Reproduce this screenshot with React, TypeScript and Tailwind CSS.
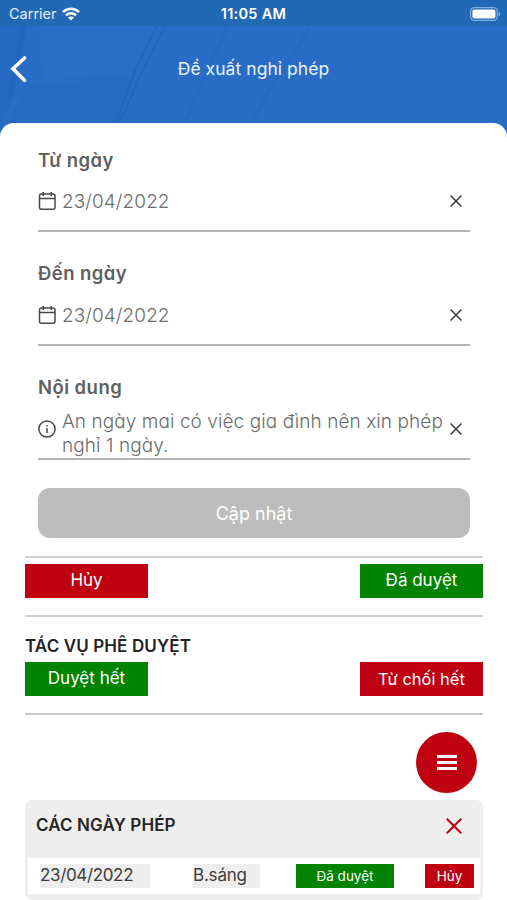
import React from 'react';
import { clsx } from 'clsx';

interface LeaveDay {
  date: string;
  session: string;
  status: string;
}

const leaveDays: LeaveDay[] = [{ date: '23/04/2022', session: 'B.sáng', status: 'Đã duyệt' }];

const CalendarIcon = () => (
  <svg viewBox="0 0 18 20" className="h-5 w-[18px] shrink-0" fill="none" stroke="#484848" strokeWidth="1.5">
    <rect x="1.5" y="3" width="15.5" height="15.2" rx="2" />
    <path d="M1.5 7.5H17M5.2 1v4M13.3 1v4" />
  </svg>
);

const InfoIcon = () => (
  <svg viewBox="0 0 18 18" className="size-[18px] shrink-0" fill="none" stroke="#484848" strokeWidth="1.5">
    <circle cx="9" cy="9" r="8.1" />
    <path d="M9 8v5M9 5v1.6" />
  </svg>
);

const CloseIcon = ({ className }: { className?: string }) => (
  <svg viewBox="0 0 12 12" className={clsx('shrink-0', className)} fill="none" stroke="currentColor">
    <path d="M.6.6l10.8 10.8M11.4.6L.6 11.4" />
  </svg>
);

interface FieldProps {
  label: string;
  icon: React.ReactNode;
  children: React.ReactNode;
  className?: string;
  textClassName?: string;
}

const Field: React.FC<FieldProps> = ({ label, icon, children, className, textClassName }) => (
  <div className={clsx('flex flex-col border-b-2 border-[#b4b6b6]', className)}>
    <label className="h-6 text-[18.5px] leading-6 font-semibold tracking-[0.45px] text-[#606060] [font-feature-settings:'cv11']">
      {label}
    </label>
    <div className="flex flex-1 items-center">
      {icon}
      <div
        className={clsx(
          "ml-[6px] flex-1 whitespace-nowrap text-[19px] leading-6 font-light text-[#6c6c6c] [font-feature-settings:'cv11']",
          textClassName
        )}
      >
        {children}
      </div>
      <CloseIcon className="mr-[8px] size-3 stroke-[1.4] text-[#333]" />
    </div>
  </div>
);

interface ActionButtonProps {
  color: 'red' | 'green';
  children: React.ReactNode;
  className?: string;
}

const ActionButton: React.FC<ActionButtonProps> = ({ color, children, className }) => (
  <button
    className={clsx(
      'flex items-center justify-center whitespace-nowrap text-white',
      color === 'red' ? 'bg-[#be0011]' : 'bg-[#008300]',
      className
    )}
  >
    {children}
  </button>
);

const StatusBar = () => (
  <div className="grid h-[26px] grid-cols-3 items-center bg-[#2169b5] pt-[2px] pr-[6px] pl-[9px] text-[14.5px] text-white">
    <div className="flex items-center gap-[5px]">
      <span className="text-[#e2eefb]">Carrier</span>
      <svg viewBox="0 0 18 14" className="h-[14px] w-[18px]" fill="none" stroke="white" strokeWidth="2.5">
        <path d="M1 5.1C5.6.7 12.4.7 17 5.1M4 8.3c2.8-2.6 7.2-2.6 10 0" />
        <path d="M9 13.5L6 10.6c1.7-1.4 4.3-1.4 6 0z" fill="white" stroke="none" />
      </svg>
    </div>
    <span className="-ml-[3px] text-center text-[14.5px] font-semibold tracking-[0.3px] whitespace-nowrap">11:05 AM</span>
    <svg viewBox="0 0 31 14" className="h-[14px] w-[31px] justify-self-end" fill="none">
      <rect x=".6" y=".6" width="26.6" height="12.8" rx="3.6" stroke="#81aee0" strokeWidth="1.2" />
      <rect x="2.4" y="2.4" width="23" height="9.2" rx="2" fill="white" />
      <path d="M28.6 4.8c2.2.8 2.2 3.6 0 4.4z" fill="#81aee0" />
    </svg>
  </div>
);

const Header = () => (
  <header className="relative h-[140px] overflow-hidden bg-[#286cc6]">
    {/* Faint building lines behind the title */}
    <svg viewBox="0 0 507 140" className="absolute inset-0 h-full w-full" fill="none">
      <path d="M0 26h28L10 105 0 124z" fill="#2367c0" opacity=".6" />
      <path d="M40 26h120l-26 48-92 6z" fill="#2b6fc9" opacity=".5" />
      <path d="M0 88l130-9-14 46H8l12-29z" fill="#2367be" opacity=".3" />
      <path d="M157 26l-22 44-19 54M165 26l-24 48-22 50" stroke="#1d5db3" strokeWidth="2" opacity=".45" />
      <path d="M228 26l-20 44-24 54M310 28l-36 54-23 42" stroke="#2061b7" strokeWidth="3" opacity=".25" />
      <path d="M24 26L10 100" stroke="#2061b7" strokeWidth="5" opacity=".25" />
    </svg>
    <div className="relative">
      <StatusBar />
      <div className="grid h-[85px] grid-cols-[60px_1fr_60px] items-center">
        <svg viewBox="0 0 18 28" className="ml-[10px] h-7 w-[18px]" fill="none" stroke="white" strokeWidth="3.6">
          <path d="M14.5 3L3 13.7l11.5 11.5" strokeLinecap="round" />
        </svg>
        <h1 className="pt-[2px] text-center text-[17.5px] tracking-[0.05px] text-[#e8f2fc]">Đề xuất nghỉ phép</h1>
      </div>
    </div>
  </header>
);

export default function App() {
  return (
    <div className="h-[900px] w-[507px] overflow-hidden bg-white font-['Inter','Liberation_Sans',sans-serif]">
      <Header />
      <main className="relative -mt-[17px] h-[777px] rounded-t-[14px] bg-white pt-[25px] pr-6 pl-[25px]">
        <form className="flex flex-col px-[13px]">
          <Field label="Từ ngày" icon={<CalendarIcon />} className="h-[84px]" textClassName="pt-[2px] tracking-[0.08px]">
            23/04/2022
          </Field>
          <Field label="Đến ngày" icon={<CalendarIcon />} className="mt-[29px] h-[85px]" textClassName="pt-[2px] tracking-[0.08px]">
            23/04/2022
          </Field>
          <Field
            label="Nội dung"
            icon={<InfoIcon />}
            className="mt-[29px] h-[85px] pb-[2px]"
            textClassName="pt-[11px] tracking-[0.07px]"
          >
            An ngày mai có việc gia đình nên xin phép
            <br />
            nghỉ 1 ngày.
          </Field>
          <button type="button" className="mt-[28px] h-[50px] rounded-xl bg-[#bdbdbd] text-[18px] text-white">
            Cập nhật
          </button>
        </form>

        <div className="mt-[18px] flex h-[61px] justify-between border-y-2 border-[#d0d0d0] pt-[6px]">
          <ActionButton color="red" className="h-[34px] w-[123px] text-[17px]">
            Hủy
          </ActionButton>
          <ActionButton color="green" className="h-[34px] w-[123px] text-[17px]">
            Đã duyệt
          </ActionButton>
        </div>

        <section className="h-[98px] border-b-2 border-[#c9c9c9] pt-[18px]">
          <h2 className="h-[27px] text-[17px] leading-[22px] font-semibold tracking-[0.12px] text-[#242424]">
            TÁC VỤ PHÊ DUYỆT
          </h2>
          <div className="flex justify-between">
            <ActionButton color="green" className="h-[34px] w-[123px] text-[17px]">
              Duyệt hết
            </ActionButton>
            <ActionButton color="red" className="h-[34px] w-[123px] text-[16.5px]">
              Từ chối hết
            </ActionButton>
          </div>
        </section>

        <div className="mt-[17px] mr-[6px] flex justify-end">
          <button className="flex size-[61px] flex-col items-center justify-center gap-[3px] rounded-full bg-[#be0011]">
            <span className="h-[3px] w-5 bg-white" />
            <span className="h-[3px] w-5 bg-white" />
            <span className="h-[3px] w-5 bg-white" />
          </button>
        </div>

        <section className="mt-[7px] h-[100px] rounded-[7px] bg-[#eee] px-[3px]">
          <div className="flex h-[58px] items-center justify-between pr-[18px] pb-[6px] pl-2">
            <h2 className="text-[17px] font-semibold tracking-[0.12px] text-[#242424]">CÁC NGÀY PHÉP</h2>
            <CloseIcon className="size-4 stroke-[1.5] text-[#be0011]" />
          </div>
          {leaveDays.map((day) => (
            <div key={day.date} className="flex h-9 bg-white pt-[6px] pl-3 text-[17px] leading-[22px] text-[#3c3c3c]">
              <span className="h-6 w-[110px] bg-[#eee] tracking-[-0.35px]">{day.date}</span>
              <span className="ml-[43px] h-6 w-[67px] bg-[#eee] tracking-[-0.2px]">{day.session}</span>
              <ActionButton color="green" className="ml-[36px] h-6 w-[98px] text-[13.5px]">
                {day.status}
              </ActionButton>
              <ActionButton color="red" className="ml-[31px] h-6 w-[49px] text-[13.5px]">
                Hủy
              </ActionButton>
            </div>
          ))}
        </section>
      </main>
    </div>
  );
}
